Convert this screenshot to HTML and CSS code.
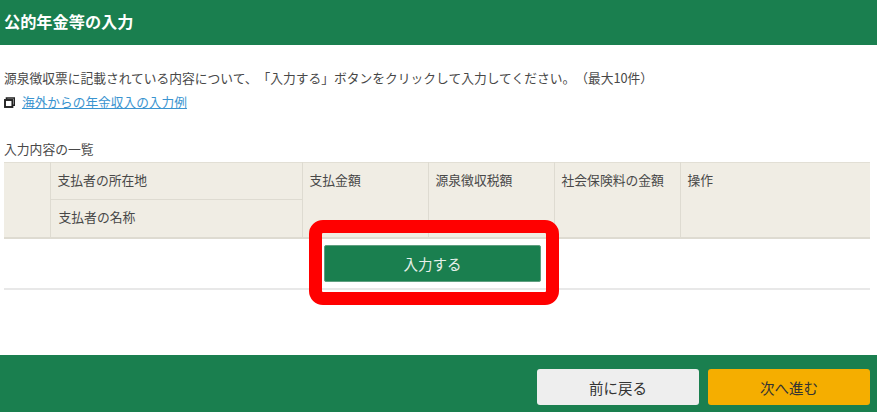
FILE: index.html
```html
<!DOCTYPE html>
<html lang="ja">
<head>
<meta charset="utf-8">
<title>公的年金等の入力</title>
<link rel="stylesheet" href="styles.css">
</head>
<body>
<div class="page">
  <header class="head"><h1 class="head-title">公的年金等の入力</h1></header>
  <main class="main">
    <p class="lead">源泉徴収票に記載されている内容について、「入力する」ボタンをクリックして入力してください。（最大10件）</p>
    <p class="linkline">
      <svg class="win-icon" width="11" height="11" viewBox="0 0 11 11" aria-hidden="true"><path d="M2.5 2V1h8v7.2H9" fill="none" stroke="#222" stroke-width="1.6"/><rect x="1" y="3" width="7.4" height="7" fill="#fff" stroke="#222" stroke-width="1.9"/></svg>
      <a class="link" href="#">海外からの年金収入の入力例</a>
    </p>
    <p class="caption">入力内容の一覧</p>
    <table class="list">
      <colgroup>
        <col class="c-num"><col class="c-name"><col class="c-amt"><col class="c-amt"><col class="c-amt"><col class="c-op">
      </colgroup>
      <thead>
        <tr class="r1">
          <th rowspan="2"></th>
          <th>支払者の所在地</th>
          <th rowspan="2">支払金額</th>
          <th rowspan="2">源泉徴収税額</th>
          <th rowspan="2">社会保険料の金額</th>
          <th rowspan="2">操作</th>
        </tr>
        <tr class="r2"><th>支払者の名称</th></tr>
      </thead>
    </table>
    <div class="action">
      <button class="btn-add" type="button">入力する</button>
      <div class="highlight"></div>
    </div>
  </main>
  <footer class="foot">
    <button class="btn btn-back" type="button">前に戻る</button>
    <button class="btn btn-next" type="button">次へ進む</button>
  </footer>
</div>
</body>
</html>
```
FILE: styles.css
```css
* { box-sizing: border-box; }
html, body { margin: 0; padding: 0; }
body {
  background: #fff;
  color: #484848;
  font-family: "Noto Sans CJK JP", "Liberation Sans", sans-serif;
  font-size: 13px;
  text-spacing-trim: space-all;
}
.page {
  width: 877px;
  height: 412px;
  display: flex;
  flex-direction: column;
  overflow: hidden;
}
.head {
  height: 45px;
  flex: none;
  background: #1a7f4f;
  display: flex;
  align-items: center;
  padding: 0 4px 4px;
}
.head-title {
  margin: 0;
  color: #fff;
  font-size: 16.2px;
  font-weight: 700;
  line-height: 24px;
}
.main { flex: 1; padding: 0 7px 0 4px; }
.lead {
  margin: 23px 0 0;
  line-height: 20px;
  font-size: 12.75px;
  white-space: nowrap;
}
.linkline {
  margin: 4px 0 0;
  line-height: 20px;
  display: flex;
  align-items: center;
  gap: 7px;
}
.win-icon { flex: none; }
.link { color: #3a94d0; text-decoration: underline; font-size: 12.7px; }
.caption { margin: 28px 0 0; line-height: 18px; font-size: 12.8px; }
.list {
  width: 866px;
  margin-top: 4px;
  border-collapse: collapse;
  table-layout: fixed;
  background: #f0ede4;
  border-top: 1px solid #e2dfd5;
  border-bottom: 2px solid #dedbd1;
}
.c-num { width: 46px; }
.c-name { width: 252px; }
.c-amt { width: 126px; }
.c-op { width: 190px; }
.list th {
  padding: 7px 7px 0;
  border-left: 1px solid #dedbd1;
  font-size: 12.8px;
  font-weight: 400;
  line-height: 20px;
  text-align: left;
  vertical-align: top;
  color: #484848;
}
.list th:first-child { border-left: 0; }
.r1 th { height: 37px; }
.r2 th { height: 38px; padding-left: 8px; border-top: 1px solid #dedbd1; }
.r2 th:first-child { border-left: 1px solid #dedbd1; }
.action {
  position: relative;
  width: 866px;
  height: 51px;
  border-bottom: 2px solid #e8e8e8;
  padding: 6px 0 0 320px;
}
.btn-add {
  display: block;
  width: 217px;
  height: 37px;
  padding: 0;
  border: 1px solid #5f9f80;
  border-radius: 2px;
  background: #1a7f4f;
  color: #e6f0ea;
  font: inherit;
  font-size: 14.5px;
}
.highlight {
  position: absolute;
  left: 305px;
  top: -19px;
  width: 250px;
  height: 85px;
  border: 13px solid #f00;
  border-radius: 14px;
}
.foot {
  height: 57px;
  flex: none;
  background: #1a7f4f;
  display: flex;
  justify-content: flex-end;
  gap: 9px;
  padding: 14px 7px 7px 0;
}
.btn {
  width: 162px;
  height: 36px;
  padding: 0;
  border: 0;
  border-radius: 3px;
  color: #333;
  font: inherit;
  font-size: 14.5px;
}
.btn-back { background: #eeeeee; }
.btn-next { background: #f5ae00; }
```
